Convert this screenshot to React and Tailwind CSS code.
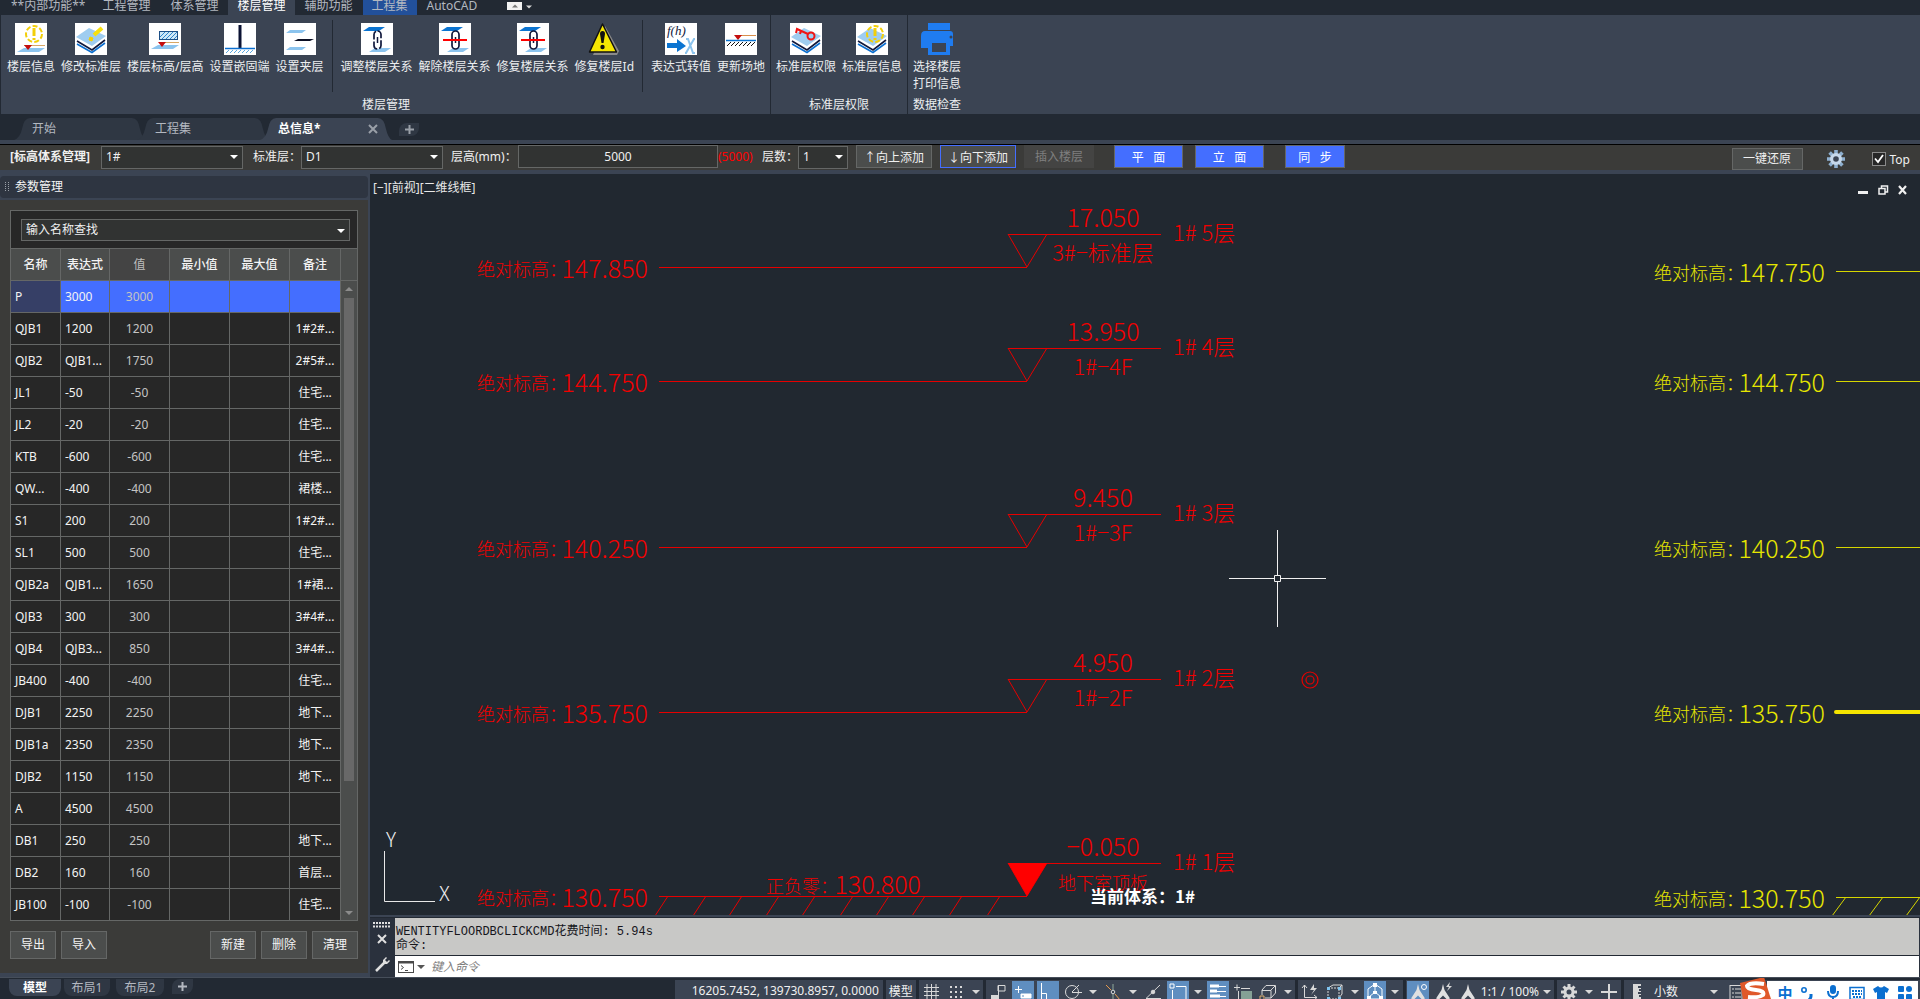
import React, { useState } from "react";

const PARAMS = [
  ["P", "3000", "3000", ""],
  ["QJB1", "1200", "1200", "1#2#..."],
  ["QJB2", "QJB1...", "1750", "2#5#..."],
  ["JL1", "-50", "-50", "住宅..."],
  ["JL2", "-20", "-20", "住宅..."],
  ["KTB", "-600", "-600", "住宅..."],
  ["QW...", "-400", "-400", "裙楼..."],
  ["S1", "200", "200", "1#2#..."],
  ["SL1", "500", "500", "住宅..."],
  ["QJB2a", "QJB1...", "1650", "1#裙..."],
  ["QJB3", "300", "300", "3#4#..."],
  ["QJB4", "QJB3...", "850", "3#4#..."],
  ["JB400", "-400", "-400", "住宅..."],
  ["DJB1", "2250", "2250", "地下..."],
  ["DJB1a", "2350", "2350", "地下..."],
  ["DJB2", "1150", "1150", "地下..."],
  ["A", "4500", "4500", ""],
  ["DB1", "250", "250", "地下..."],
  ["DB2", "160", "160", "首层..."],
  ["JB100", "-100", "-100", "住宅..."],
];

// y is the elevation line, in canvas units
const LEVELS = [
  { y: 93, abs: "147.850", value: "17.050", name: "3#−标准层", floor: "1# 5层" },
  { y: 207, abs: "144.750", value: "13.950", name: "1#−4F", floor: "1# 4层" },
  { y: 373, abs: "140.250", value: "9.450", name: "1#−3F", floor: "1# 3层" },
  { y: 538, abs: "135.750", value: "4.950", name: "1#−2F", floor: "1# 2层" },
  { y: 722, abs: "130.750", value: "−0.050", name: "地下室顶板", floor: "1# 1层", ground: true },
];

const RIGHT_LEVELS = [
  { y: 97, abs: "147.750" },
  { y: 207, abs: "144.750" },
  { y: 373, abs: "140.250" },
  { y: 538, abs: "135.750", active: true },
  { y: 723, abs: "130.750" },
];

const CAD_FONT = "font-['Liberation_Sans_Narrow','Noto_Sans_CJK_SC',sans-serif]";

/* ---------- ribbon icons ---------- */

function Tile({ children }) {
  return (
    <svg width="32" height="32" viewBox="0 0 32 32" className="bg-white">
      {children}
    </svg>
  );
}

function Layers() {
  return (
    <g fill="none">
      <path d="M1 14 14 5 31 13 17 23Z" fill="#9fcdf0" />
      <path d="M2 18 17 27 30 17" stroke="#10183c" strokeWidth="1.6" />
      <path d="M2 21 17 29.500 30 20" stroke="#0b6fd0" strokeWidth="1.6" />
    </g>
  );
}

function Bang({ cx, cy }) {
  return (
    <g stroke="#f2cf0a" fill="none" strokeWidth="2">
      <circle cx={cx} cy={cy} r="8" strokeDasharray="5 2.200" />
      <path d={`M${cx} ${cy - 6}V${cy + 2}M${cx} ${cy + 4}V${cy + 6}`} strokeWidth="3" />
    </g>
  );
}

function InfoIcon() {
  return (
    <Tile>
      <path d="M2 29 9 25H30L24 29Z" fill="#8cc4ee" />
      <Bang cx={19} cy={11} />
      <path d="M9 22.500H30" stroke="#d9a866" />
      <path d="M9 22H17L13 27Z" fill="#c40d0d" />
    </Tile>
  );
}

function EditLayerIcon() {
  return (
    <Tile>
      <Layers />
      <path d="M27 5 19 12" stroke="#f7e00d" strokeWidth="4" />
      <path d="M15 14l3 1-1 3-3-1z" fill="#f2cf0a" stroke="#f2cf0a" />
    </Tile>
  );
}

function ElevIcon() {
  return (
    <Tile>
      <path d="M2 26 9 22H30L24 26Z" fill="#8cc4ee" />
      <rect x="10.500" y="8.500" width="18" height="8" fill="#cfe8f8" stroke="#1d4f86" />
      <path d="M11 14l5-5M13 16l7-7M17 16l7-7M21 16l7-7M25 16l3-3" stroke="#2f86cc" />
      <path d="M10 19.500H30" stroke="#d9a866" />
      <path d="M9 19H17L13 24Z" fill="#c40d0d" />
    </Tile>
  );
}

function FixedEndIcon() {
  return (
    <Tile>
      <path d="M16 2V25" stroke="#0b1233" strokeWidth="3" />
      <path d="M1 25.500H31" stroke="#0b6fd0" strokeWidth="1.500" />
      <path d="M2 30l3-3M6 30l3-3M10 30l3-3M14 30l3-3M18 30l3-3M22 30l3-3M26 30l3-3" stroke="#5ba7e0" />
    </Tile>
  );
}

function MezzIcon() {
  return (
    <Tile>
      <path d="M2 10 6 7H22L18 10ZM2 27 6 24H22L18 27Z" fill="#8cc4ee" />
      <path d="M10 18 14 16H30L26 18Z" fill="#0b0f24" />
    </Tile>
  );
}

function ChainIcon({ cut }) {
  return (
    <Tile>
      <path d="M2 8 8 4H24L18 8Z" fill="#0b74d1" />
      <path d="M8 29 14 25H30L24 29Z" fill="#8cc4ee" />
      <rect x="13" y="8" width="7" height="18" rx="3.500" fill="#fff" stroke="#10183c" strokeWidth="1.700" strokeDasharray={cut ? "none" : "9 2"} />
      <path d="M16.500 14V20" stroke="#10183c" strokeWidth="1.500" />
      {cut && <path d="M4 17H28" stroke="#f00" strokeWidth="2" />}
    </Tile>
  );
}

function WarnIcon() {
  return (
    <svg width="32" height="32" viewBox="0 0 32 32">
      <path d="M17 3 31 28 29 32H5Z" fill="#8a8a8a" />
      <path d="M14.500 1 28.500 29H1.500Z" fill="#f5e602" stroke="#111" strokeWidth="1.500" strokeLinejoin="round" />
      <path d="M12 11q0-3 2.500-3t2.500 3l-1.500 9h-2z" fill="#111" />
      <circle cx="14.500" cy="24" r="2.200" fill="#111" />
    </svg>
  );
}

function ExprIcon() {
  return (
    <Tile>
      <text x="2" y="12" fontSize="13" fill="#10183c" className="font-['Liberation_Serif',serif] italic">f(h)</text>
      <path d="M2 20H12V16L21 23 12 29V25H2Z" fill="#0b74d1" />
      <path d="M21 16h2l5 14h2M30 16h-1l-8 14h-1" stroke="#8cc4ee" strokeWidth="2" fill="none" />
    </Tile>
  );
}

function SiteIcon() {
  return (
    <Tile>
      <path d="M13 12.500H31" stroke="#d98f4c" />
      <path d="M9 12H17L13 17Z" fill="#c40d0d" />
      <path d="M1 17.500H31" stroke="#0b74d1" strokeWidth="1.500" />
      <path d="M2 23l4-4M6 23l4-4M10 23l4-4M14 23l4-4M18 23l4-4M22 23l4-4M26 23l4-4" stroke="#111" />
    </Tile>
  );
}

function KeyIcon() {
  return (
    <Tile>
      <Layers />
      <g stroke="#f01414" strokeWidth="2" fill="none">
        <circle cx="21" cy="13" r="3.500" />
        <path d="M18 11 7 6 6 10M11 8l-1 3" />
      </g>
    </Tile>
  );
}

function LayerInfoIcon() {
  return (
    <Tile>
      <Layers />
      <Bang cx={19} cy={11} />
    </Tile>
  );
}

function PrinterIcon() {
  return (
    <svg width="32" height="32" viewBox="0 0 32 32" fill="#1f7cf0">
      <path d="M7 0H29V7H7Z" />
      <path d="M4 8H29Q32 8 32 11V23H28V17H7V25H0V13Q0 8 4 8Z" />
      <path d="M7 17H29V32H7ZM11 20V29H25V20Z" fillRule="evenodd" />
      <circle cx="30" cy="14" r="1.500" fill="#3b4453" />
    </svg>
  );
}

function RibbonButton({ icon, label, second }) {
  return (
    <button className="flex flex-col items-center text-xs leading-[17px] text-[#eceef0] whitespace-nowrap">
      {icon}
      <span className="mt-[3px]">{label}</span>
      {second && <span>{second}</span>}
    </button>
  );
}

function RibbonPanel({ title, children }) {
  return (
    <section className="flex flex-col justify-between border-r border-[#222933] px-[5px] pt-2 pb-px">
      <div className="flex gap-[6px]">{children}</div>
      <h2 className="text-center text-xs leading-[17px] text-[#eceef0] whitespace-nowrap">{title}</h2>
    </section>
  );
}

function RibbonSplit() {
  return <div className="mx-[2px] -mt-[3px] h-[72px] w-px bg-[#222933]" />;
}

/* ---------- small shared pieces ---------- */

function Caret({ className }) {
  return (
    <svg width="8" height="4" viewBox="0 0 8 4" className={className}>
      <path d="M0 0H8L4 4Z" fill="currentColor" />
    </svg>
  );
}

function Combo({ id, label, value, options, className }) {
  return (
    <div className={"relative " + className}>
      <select
        id={id}
        aria-label={label}
        defaultValue={value}
        className="h-full w-full appearance-none border border-[#656766] bg-[#313332] pl-1 text-xs text-[#f0f0f0] outline-none"
      >
        {options.map((o) => (
          <option key={o}>{o}</option>
        ))}
      </select>
      <Caret className="pointer-events-none absolute right-[5px] top-[10px] text-white" />
    </div>
  );
}

function FileTab({ label, active, children }) {
  return (
    <div className={"relative -mr-[9px] flex h-[22px] w-[132px] items-center justify-between pl-[18px] pr-[14px] " + (active ? "font-bold text-white" : "text-[#b3b8c0]")}>
      <svg className="absolute inset-0 h-full w-full" viewBox="0 0 132 22" preserveAspectRatio="none">
        <path d="M0 22Q6 20 8 11 10 0 16 0H118Q124 0 126 11 128 20 132 22Z" fill={active ? "#3b4453" : "#2f3743"} />
      </svg>
      <a href="#tab" className="relative">{label}</a>
      {children}
    </div>
  );
}

/* ---------- ribbon and bars ---------- */

function MenuBar() {
  const tab = "flex h-[15px] items-center pb-1 leading-[11px] whitespace-nowrap ";
  return (
    <nav className="flex h-[15px] overflow-hidden bg-[#222933] pl-px text-xs text-[#b3b8c0]">
      <a href="#internal" className={tab + "pl-[10px] pr-[7px]"}>**内部功能**</a>
      <a href="#project" className={tab + "px-[10px]"}>工程管理</a>
      <a href="#system" className={tab + "px-[10px]"}>体系管理</a>
      <a href="#floor" className={tab + "bg-[#3b4453] px-[9px] text-white"}>楼层管理</a>
      <a href="#aux" className={tab + "px-[10px]"}>辅助功能</a>
      <a href="#set" className={tab + "bg-[#22509a] px-[9px]"}>工程集</a>
      <a href="#cad" className={tab + "px-[10px]"}>AutoCAD</a>
      <button aria-label="最小化功能区" className="ml-5 mt-[2px] flex h-2 w-[15px] items-center justify-center bg-[#f2f2f2]">
        <Caret className="w-[6px] rotate-180 text-[#777]" />
      </button>
      <Caret className="ml-1 mt-[5px] w-[6px] text-[#d8d8d8]" />
    </nav>
  );
}

function Ribbon() {
  return (
    <div className="flex h-[99px] border-l border-[#222933] bg-[#3b4453] pl-px">
      <RibbonPanel title="楼层管理">
        <RibbonButton icon={<InfoIcon />} label="楼层信息" />
        <RibbonButton icon={<EditLayerIcon />} label="修改标准层" />
        <RibbonButton icon={<ElevIcon />} label="楼层标高/层高" />
        <RibbonButton icon={<FixedEndIcon />} label="设置嵌固端" />
        <RibbonButton icon={<MezzIcon />} label="设置夹层" />
        <RibbonSplit />
        <RibbonButton icon={<ChainIcon />} label="调整楼层关系" />
        <RibbonButton icon={<ChainIcon cut />} label="解除楼层关系" />
        <RibbonButton icon={<ChainIcon cut />} label="修复楼层关系" />
        <RibbonButton icon={<WarnIcon />} label="修复楼层Id" />
        <RibbonSplit />
        <RibbonButton icon={<ExprIcon />} label="表达式转值" />
        <RibbonButton icon={<SiteIcon />} label="更新场地" />
      </RibbonPanel>
      <RibbonPanel title="标准层权限">
        <RibbonButton icon={<KeyIcon />} label="标准层权限" />
        <RibbonButton icon={<LayerInfoIcon />} label="标准层信息" />
      </RibbonPanel>
      <section className="flex flex-col justify-between px-[5px] pt-2 pb-px">
        <RibbonButton icon={<PrinterIcon />} label="选择楼层" second="打印信息" />
        <h2 className="text-center text-xs leading-[17px] text-[#eceef0]">数据检查</h2>
      </section>
    </div>
  );
}

function FileTabs() {
  return (
    <div className="flex h-[26px] items-end bg-[#222933] pl-[14px] text-xs">
      <FileTab label="开始" />
      <FileTab label="工程集" />
      <FileTab label="总信息*" active>
        <button aria-label="关闭" className="relative text-[#9aa0a8]">
          <svg width="10" height="10" viewBox="0 0 10 10" stroke="currentColor" strokeWidth="2">
            <path d="M1 1 9 9M9 1 1 9" />
          </svg>
        </button>
      </FileTab>
      <button aria-label="新建" className="mb-1 ml-4 flex h-[13px] w-[20px] items-center justify-center rounded-br-lg rounded-tl-lg bg-[#2f3743] text-[#9aa0a8]">
        <svg width="9" height="9" viewBox="0 0 9 9" stroke="currentColor" strokeWidth="2">
          <path d="M0 4.500H9M4.500 0V9" />
        </svg>
      </button>
    </div>
  );
}

function ToolBar() {
  const gray = "h-[23px] border border-[#656766] bg-[#4b4d4c] text-[#f0f0f0] whitespace-nowrap";
  const blue = "h-[23px] border border-[#656766] bg-[#446eff] text-white whitespace-pre";
  return (
    <div className="flex h-[26px] border-t border-black bg-[#3b3b39] pl-[10px] text-xs leading-[23px] text-[#f0f0f0]">
      <label htmlFor="system" className="w-[91px] font-bold whitespace-nowrap">[标高体系管理]</label>
      <Combo id="system" value="1#" options={["1#", "2#", "3#"]} className="h-[23px] w-[142px]" />
      <label htmlFor="std" className="ml-[10px] w-12 whitespace-nowrap">标准层：</label>
      <Combo id="std" value="D1" options={["D1", "D2"]} className="h-[23px] w-[142px]" />
      <label htmlFor="height" className="ml-2 w-[67px] whitespace-nowrap">层高(mm)：</label>
      <input id="height" defaultValue="5000" className="h-[23px] w-[200px] border border-[#656766] bg-[#313332] text-center outline-none" />
      <span className="w-11 text-[#ff0000]">(5000)</span>
      <label htmlFor="count" className="w-9 whitespace-nowrap">层数：</label>
      <Combo id="count" value="1" options={["1", "2", "3"]} className="h-[23px] w-[50px]" />
      <button className={"ml-2 w-[76px] " + gray}>↑向上添加</button>
      <button className="ml-2 h-[23px] w-[76px] border border-[#446eff] bg-[#4b4d4c] whitespace-nowrap">↓向下添加</button>
      <button disabled className="ml-2 h-[23px] w-[70px] bg-[#444443] text-[#7f7f7f]">插入楼层</button>
      <button className={"ml-5 w-[69px] " + blue}>平   面</button>
      <button className={"ml-3 w-[69px] " + blue}>立   面</button>
      <button className={"ml-[21px] w-[60px] " + blue}>同   步</button>
      <div className="ml-auto flex items-center pr-[10px] pt-[3px]">
        <button className="h-[22px] w-[71px] border border-[#656766] bg-[#4b4d4c] leading-5">一键还原</button>
        <button aria-label="设置" className="ml-6">
          <svg width="18" height="18" viewBox="0 0 18 18">
            <g stroke="#8fb0d0" strokeWidth="3.600">
              <path d="M9 0V18M0 9H18M2.600 2.600 15.400 15.400M15.400 2.600 2.600 15.400" />
            </g>
            <circle cx="9" cy="9" r="6" fill="#c6d8ea" />
            <circle cx="9" cy="9" r="2.800" fill="#3b4453" />
          </svg>
        </button>
        <label className="ml-[27px] flex items-center gap-1">
          <span className="relative flex">
            <input type="checkbox" defaultChecked className="peer h-[14px] w-[14px] appearance-none border border-[#8a8a8a] bg-[#272727]" />
            <svg width="14" height="14" viewBox="0 0 14 14" className="pointer-events-none absolute inset-0 hidden peer-checked:block">
              <path d="M3 6.500 6 10 11 3" stroke="#fff" strokeWidth="1.800" fill="none" />
            </svg>
          </span>
          Top
        </label>
      </div>
    </div>
  );
}

/* ---------- parameter palette ---------- */

function ParamPanel() {
  const [selected, setSelected] = useState(0);
  const th = "h-8 border-b border-r border-[#656766] bg-[#4b4d4c] font-medium";
  const td = "h-8 overflow-hidden border-b border-r border-[#656766] whitespace-nowrap ";
  const btn = "h-7 w-[46px] border border-[#656766] bg-[#4b4d4c]";
  return (
    <aside className="mb-1 mr-[2px] mt-[2px] flex w-[368px] shrink-0 flex-col text-xs text-[#f4f4f4]">
      <header className="mb-[2px] flex h-[22px] items-center gap-[6px] rounded bg-[#2e3541] pl-[5px]">
        <svg width="4" height="10" viewBox="0 0 4 10" fill="#9aa0a8">
          <path d="M0 0h1v1H0zM3 0h1v1H3zM0 2h1v1H0zM3 2h1v1H3zM0 4h1v1H0zM3 4h1v1H3zM0 6h1v1H0zM3 6h1v1H3zM0 8h1v1H0zM3 8h1v1H3z" />
        </svg>
        参数管理
      </header>
      <div className="flex-1 bg-[#3b3b39] p-[10px]">
        <div className="border-x border-t border-[#656766] bg-[#272727]">
          <div className="border-b border-[#656766] pb-[7px] pl-[10px] pr-[7px] pt-2">
            <Combo label="输入名称查找" value="输入名称查找" options={["输入名称查找"]} className="h-[22px]" />
          </div>
          <div className="flex">
            <table className="w-[330px] table-fixed border-separate border-spacing-0">
              <thead>
                <tr>
                  <th className={th + " w-[50px]"}>名称</th>
                  <th className={th + " w-[49px]"}>表达式</th>
                  <th className="h-8 w-[60px] border-b border-r border-[#656766] bg-[#444] font-normal text-[#bdbdbd]">值</th>
                  <th className={th + " w-[60px]"}>最小值</th>
                  <th className={th + " w-[60px]"}>最大值</th>
                  <th className={th + " w-[51px]"}>备注</th>
                </tr>
              </thead>
              <tbody>
                {PARAMS.map(([name, expr, value, note], i) => (
                  <tr key={name} onClick={() => setSelected(i)} className={i === selected ? "bg-[#446eff]" : ""}>
                    <td className={td + "pl-1 " + (i === selected ? "bg-[#363f66]" : "")}>{name}</td>
                    <td className={td + "pl-1"}>{expr}</td>
                    <td className={td + "text-center text-[#c4c4c4]"}>{value}</td>
                    <td className={td} />
                    <td className={td} />
                    <td className={td + "text-center"}>{note}</td>
                  </tr>
                ))}
              </tbody>
            </table>
            <div className="flex w-4 flex-col border-b border-[#656766] bg-[#4b4d4c] text-[#8c8c8c]">
              <div className="h-8 border-b border-[#656766]" />
              <Caret className="mx-auto mt-[6px] rotate-180" />
              <div className="mx-auto mt-[7px] h-[483px] w-[10px] bg-[#686868]" />
              <Caret className="mx-auto mb-[5px] mt-auto" />
            </div>
          </div>
        </div>
        <div className="mt-[10px] flex gap-[5px]">
          <button className={btn}>导出</button>
          <button className={btn}>导入</button>
          <button className={btn + " ml-auto"}>新建</button>
          <button className={btn}>删除</button>
          <button className={btn}>清理</button>
        </div>
      </div>
    </aside>
  );
}

/* ---------- drawing canvas ---------- */

function AbsLabel({ x, y, text }) {
  return (
    <>
      <text x={x} y={y - 2} fontSize="18">绝对标高：</text>
      <text x={x + 171} y={y} fontSize="25" textAnchor="end">{text}</text>
    </>
  );
}

function Canvas() {
  return (
    <main className="relative min-h-0 flex-1 overflow-hidden bg-[#212830]">
      <svg className={"absolute inset-0 h-full w-full font-light " + CAD_FONT}>
        <g fill="#f20000" stroke="none">
          {LEVELS.map((l) => (
            <g key={l.abs}>
              <AbsLabel x={107} y={l.y + 11} text={l.abs} />
              <g stroke="#e60000" fill="none" strokeWidth="1">
                <path d={`M289 ${l.y + 0.5}H657`} />
                <path d={`M657 ${l.y}L638 ${l.y - 33}M657 ${l.y}L677 ${l.y - 33}M638 ${l.y - 32.5}H791`} />
              </g>
              <text x="733" y={l.y - 40} fontSize="25" textAnchor="middle">{l.value}</text>
              <text x="733" y={l.y - 6} fontSize={l.ground ? 18 : 22} textAnchor="middle">{l.name}</text>
              <text x="803" y={l.y - 26} fontSize="22">{l.floor}</text>
            </g>
          ))}
          <path d="M638 689H677L657 722Z" fill="#ff0000" />
          <text x="396" y="719" fontSize="18">正负零：</text>
          <text x="551" y="720" fontSize="25" textAnchor="end">130.800</text>
          {[298, 336, 372, 409, 445, 483, 519, 555, 592, 630].map((x) => (
            <path key={x} d={`M${x} 722L${x - 13} 742`} stroke="#e60000" />
          ))}
          <g fill="none" stroke="#e60000" strokeWidth="1.200">
            <circle cx="940" cy="506" r="8" />
            <circle cx="940" cy="506" r="4" />
          </g>
        </g>

        <g fill="#e6e600">
          {RIGHT_LEVELS.map((l) => (
            <g key={l.abs}>
              <AbsLabel x={1284} y={l.y + 11} text={l.abs} />
              {l.active ? (
                <path d={`M1466 ${l.y}H3000`} stroke="#f5e400" strokeWidth="4" strokeLinecap="round" />
              ) : (
                <path d={`M1466 ${l.y + 0.5}H3000`} stroke="#d6d600" />
              )}
            </g>
          ))}
          {[1476, 1513, 1550].map((x) => (
            <path key={x} d={`M${x} 723L${x - 14} 742`} stroke="#d6d600" />
          ))}
        </g>

        {/* UCS axes */}
        <path d="M14.500 677V727.500H65" stroke="#e8e8e8" fill="none" />
        <text x="16" y="673" fontSize="20" fill="#f0f0f0">Y</text>
        <text x="69" y="727" fontSize="20" fill="#f0f0f0">X</text>

        {/* crosshair */}
        <path d="M859 404.500H904M911 404.500H956M907.500 356V401M907.500 408V453M904.500 401.500H910.500V407.500H904.500Z" stroke="#f0f0f0" fill="none" />

        <text x="720" y="729" fontSize="17" fontWeight="700" fill="#fff">当前体系：1#</text>
      </svg>
      <div className="relative flex items-start justify-between pl-[3px] pr-3 pt-[5px]">
        <span className="text-xs leading-[18px] text-[#e8e8e8]">[−][前视][二维线框]</span>
        <div className="flex gap-[9px] pt-[6px] text-[#f0f0f0]">
          <button aria-label="最小化">
            <svg width="11" height="10" viewBox="0 0 11 10"><path d="M0 6h10v3H0z" fill="currentColor" /></svg>
          </button>
          <button aria-label="还原">
            <svg width="11" height="10" viewBox="0 0 11 10" fill="none" stroke="currentColor" strokeWidth="1.500">
              <path d="M1 3.500h6v5.500H1zM3.500 3V1H9.500V7H7" />
            </svg>
          </button>
          <button aria-label="关闭">
            <svg width="10" height="10" viewBox="0 0 10 10" stroke="currentColor" strokeWidth="2.200"><path d="M1 1 8 9M8 1 1 9" /></svg>
          </button>
        </div>
      </div>
    </main>
  );
}

function CommandLine() {
  return (
    <div className="mt-[2px] flex border-t border-[#222933] bg-[#2a313d] pr-px">
      <div className="flex w-[25px] flex-col items-center pr-px pt-1 text-[#e0e0e0]">
        <svg width="18" height="6" viewBox="0 0 18 6" stroke="currentColor" strokeWidth="2" strokeDasharray="2 1">
          <path d="M0 1H18M0 4.500H18" />
        </svg>
        <button aria-label="关闭命令行" className="mt-[6px]">
          <svg width="10" height="10" viewBox="0 0 10 10" stroke="currentColor" strokeWidth="2"><path d="M1 1 9 9M9 1 1 9" /></svg>
        </button>
        <button aria-label="自定义" className="mt-[13px]">
          <svg width="15" height="15" viewBox="0 0 15 15">
            <path d="M1 14 9 6" stroke="currentColor" strokeWidth="2.500" />
            <path d="M11 0 8 3v4h4l3-3-1-1-2 2-2-2 2-2z" fill="currentColor" />
          </svg>
        </button>
      </div>
      <div className="flex-1 text-[12px]">
        <div className="border-b border-[#222933] bg-[#c8c8c6] pb-[2px] pl-px pt-[7px] leading-[14px] text-[#16161c] font-['Liberation_Mono','Noto_Sans_CJK_SC',monospace]">
          <p>WENTITYFLOORDBCLICKCMD花费时间: 5.94s</p>
          <p>命令:</p>
        </div>
        <div className="flex h-[21px] items-center bg-white pl-[3px]">
          <svg width="16" height="12" viewBox="0 0 16 12" fill="none" stroke="#4a4a4a">
            <rect x="0.500" y="0.500" width="15" height="11" />
            <path d="M1 1.500H15" strokeWidth="2" />
            <path d="M3 4.500 5.500 6.500 3 8.500M7 9.500H10" />
          </svg>
          <Caret className="ml-[3px] text-[#555]" />
          <input aria-label="命令" placeholder="键入命令" className="ml-[6px] flex-1 bg-transparent italic outline-none placeholder:text-[#7d7d7d]" />
        </div>
      </div>
    </div>
  );
}

/* ---------- status bar ---------- */

function StatusIcon({ label, on, children }) {
  return (
    <button aria-label={label} className="flex w-6 justify-center pt-px">
      <svg width="22" height="22" viewBox="0 0 22 22" fill="none" stroke={on ? "#fff" : "#d8d8d8"} className={on ? "bg-[#5f8ec0]" : ""}>
        {children}
      </svg>
    </button>
  );
}

function Drop() {
  return (
    <button aria-label="更多" className="flex w-[14px] items-center justify-center text-[#d8d8d8]">
      <Caret />
    </button>
  );
}

const Figure = () => <path d="M11 3 12.500 9 18 17.500 15 18.500 11 14.500 7 18.500 4 17.500 9.500 9Z" fill="#e0e0e0" stroke="none" />;

function StatusBar() {
  const group = "flex gap-px bg-[#3b4453]";
  return (
    <footer className="relative flex h-[22px] items-start overflow-hidden border-t border-[#464e5a] bg-[#222933] pt-px text-xs text-[#f0f0f0]">
      <div className="flex flex-1 pl-[9px] text-[#b3b8c0]">
        <a href="#model" className="flex h-[17px] w-[52px] items-center justify-center rounded-b-lg bg-[#3b4453] font-bold text-white">模型</a>
        <a href="#layout1" className="ml-[3px] flex h-[17px] w-[46px] items-center justify-center rounded-b-lg bg-[#2f3743]">布局1</a>
        <a href="#layout2" className="ml-[6px] flex h-[17px] w-12 items-center justify-center rounded-b-lg bg-[#2f3743]">布局2</a>
        <button aria-label="新建布局" className="ml-2 flex h-[15px] w-[21px] items-center justify-center rounded-br-lg rounded-tl-lg bg-[#2f3743]">
          <svg width="9" height="9" viewBox="0 0 9 9" stroke="currentColor" strokeWidth="2"><path d="M0 4.500H9M4.500 0V9" /></svg>
        </button>
      </div>
      <div className="mt-px flex h-6 gap-[3px] leading-[22px]">
        <span className="w-[208px] bg-[#3b4453] pr-1 text-right">16205.7452, 139730.8957, 0.0000</span>
        <button className="w-[30px] bg-[#3b4453]">模型</button>
        <div className={group}>
          <StatusIcon label="栅格"><path d="M7 3V18M11.500 3V18M16 3V18M4 6.500H19M4 10.500H19M4 14.500H19" /></StatusIcon>
          <StatusIcon label="捕捉"><path d="M5 6H19M5 11H19M5 16H19" strokeWidth="2" strokeDasharray="2 3" /></StatusIcon>
          <Drop />
        </div>
        <div className={group}>
          <StatusIcon label="推断约束"><path d="M11 4.500H18V10H11ZM11.500 4V16" /><path d="M4 14h8v6H4z" fill="#d8d8d8" stroke="none" /></StatusIcon>
          <StatusIcon label="动态输入" on><path d="M3 8.500H10M6.500 5V12" /><path d="M9 13h10v4H9z" fill="#fff" /><path d="M11 14v2" stroke="#5f8ec0" /></StatusIcon>
          <StatusIcon label="正交" on><path d="M4.500 2V20M5 12.500H9.500V18" /></StatusIcon>
          <StatusIcon label="极轴"><circle cx="10" cy="11" r="6.500" /><path d="M10 11.500H20M10 11 17 4" /></StatusIcon>
          <Drop />
          <StatusIcon label="等轴测"><path d="M4 4 9 9M13 13l5 6" stroke="#e89a4e" /><path d="M11 3V9M11 13V20" stroke="#8fa89a" /><circle cx="11" cy="11" r="1.800" /></StatusIcon>
          <Drop />
          <StatusIcon label="追踪"><path d="M18 4 4 17.500H19" /><circle cx="11" cy="11" r="1.800" fill="#d8d8d8" /></StatusIcon>
          <StatusIcon label="对象捕捉" on><path d="M3 3H7V7H3ZM9 5.500H19V20M5.500 9V20" /></StatusIcon>
          <Drop />
          <StatusIcon label="线宽" on><path d="M3 5.500H19M3 10.500H19M3 15.500H19" /><path d="M3 5h9M3 10h7M3 15h10" strokeWidth="3" /></StatusIcon>
          <StatusIcon label="透明度"><path d="M2 6.500H8M5 3.500V9.500M9 7.500H18M6.500 10V18" /><path d="M9 10h11v10H9z" fill="#84a095" stroke="none" /></StatusIcon>
          <StatusIcon label="循环选择"><path d="M5 9.500H14V17H8M5 9V14M5 9 9 4.500H18.500V12L14 17M14 9l4-4" /><path d="M3 15H7V20H3Z" stroke="#e0b070" /></StatusIcon>
          <Drop />
        </div>
        <div className={group + " pr-px"}>
          <StatusIcon label="动态 UCS"><path d="M5.500 4V16.500H18M3 7 5.500 4 8 7M15 14l3 2.500L15 19" /><path d="M15 3l-4 6h4l-3 5 6-7h-3z" fill="#d8d8d8" stroke="none" /></StatusIcon>
          <StatusIcon label="过滤选择"><path d="M4 7 9 4H18V13L15 17M15 7l3-3" /><path d="M4 7H15V18H4Z" strokeDasharray="2 1" /><path d="M3 6h3v3H3zM14 6h3v3h-3zM14 16h3v3h-3zM3 16h3v3H3z" fill="#7fc4f0" stroke="none" /></StatusIcon>
          <Drop />
          <StatusIcon label="小控件" on><path d="M11 4V11L5 16M11 11l6 5M11 3 4 8v9M11 3l7 5v9M4 18h14" /><path d="M9 2h4v4H9zM3 15h4v4H3zM15 15h4v4h-4zM9 10h4v3H9z" fill="#fff" stroke="none" /></StatusIcon>
          <Drop />
        </div>
        <div className={group}>
          <StatusIcon label="注释可见" on><Figure /><circle cx="17" cy="6" r="2.500" fill="#5f8ec0" /></StatusIcon>
          <StatusIcon label="自动缩放"><Figure /><path d="M18 1l-4 5h3l-2 4 5-5h-3z" fill="#d8d8d8" stroke="none" /></StatusIcon>
          <StatusIcon label="注释比例"><Figure /></StatusIcon>
          <button className="whitespace-nowrap">1:1 / 100%</button>
          <Drop />
        </div>
        <div className={group}>
          <StatusIcon label="工作空间">
            <path d="M11 3V19M3 11H19M5.500 5.500l11 11M16.500 5.500l-11 11" strokeWidth="3" />
            <circle cx="11" cy="11" r="4" strokeWidth="3" fill="#3b4453" />
          </StatusIcon>
          <Drop />
          <StatusIcon label="注释监视器"><path d="M3 11H19M11 3V19" strokeWidth="2" /></StatusIcon>
        </div>
        <div className={group}>
          <StatusIcon label="单位"><path d="M8 3h8v2h-3v2h3v1h-2v2h2v1h-3v2h3v1h-2v2h2v2H8z" fill="#d8d8d8" stroke="none" /></StatusIcon>
          <button className="w-[57px] pl-[5px] text-left">小数</button>
          <Drop />
          <StatusIcon label="快捷特性"><path d="M7 4.500H19V20M7 4V20M9 8h2M12 8h6M9 12h2M12 12h6M9 16h2M12 16h6" /></StatusIcon>
          <span className="w-[173px]" />
        </div>
      </div>

      {/* input method bar floats over the status bar */}
      <div className="absolute bottom-0 right-[2px] flex h-[18px] w-[151px] items-start gap-1 overflow-hidden bg-white pl-2 pt-1 text-[#0b6fd0]">
        <span className="w-5 text-center text-[15px] font-bold leading-4">中</span>
        <svg width="20" height="16" viewBox="0 0 20 16" fill="none" stroke="currentColor" strokeWidth="1.600"><circle cx="5" cy="5" r="2.200" /><path d="M12 9v2q0 2-2 4" strokeWidth="3" /></svg>
        <svg width="20" height="16" viewBox="0 0 20 16" fill="none" stroke="currentColor" strokeWidth="2"><rect x="8" y="1" width="4" height="7" rx="2" fill="currentColor" /><path d="M5 6q0 6 5 6t5-6M10 12V16" /></svg>
        <svg width="20" height="16" viewBox="0 0 20 16" fill="none" stroke="currentColor"><rect x="3" y="2.500" width="14" height="12" strokeWidth="1.500" /><path d="M5 6h10M5 9h10M6 12h8" strokeWidth="1.800" strokeDasharray="2 1" /></svg>
        <svg width="20" height="16" viewBox="0 0 20 16" fill="currentColor"><path d="M7 1q3 3 6 0l5 3-2 4-2-1v9H6V7L4 8 2 4z" /></svg>
        <svg width="20" height="16" viewBox="0 0 20 16" fill="currentColor"><rect x="3" y="1" width="6" height="6" rx="1" /><rect x="11" y="1" width="6" height="6" rx="3" /><rect x="3" y="9" width="6" height="6" rx="1" /><rect x="11" y="9" width="6" height="6" rx="1" /></svg>
      </div>
      <svg className="absolute bottom-0 right-[148px]" width="32" height="22" viewBox="0 0 32 22">
        <path d="M0 6 24 0 31 22H3Z" fill="#e0582a" />
        <path d="M24 7Q10 5 7 9 7 12 16 13 25 14 23 18 19 21 8 20" stroke="#fff" strokeWidth="4" fill="none" />
      </svg>
    </footer>
  );
}

export default function App() {
  return (
    <div className="flex h-screen min-w-[1400px] flex-col overflow-hidden bg-[#3b4453] font-['Noto_Sans','Noto_Sans_CJK_SC',sans-serif]">
      <MenuBar />
      <Ribbon />
      <FileTabs />
      <div className="h-1 shrink-0" />
      <ToolBar />
      <div className="flex min-h-0 flex-1 pt-1">
        <ParamPanel />
        <div className="flex min-w-0 flex-1 flex-col">
          <Canvas />
          <CommandLine />
        </div>
      </div>
      <StatusBar />
    </div>
  );
}
